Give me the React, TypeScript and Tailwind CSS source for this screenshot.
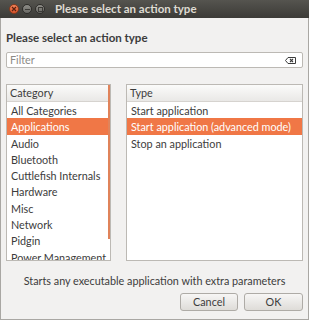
import React from "react";

const categories = [
  "All Categories",
  "Applications",
  "Audio",
  "Bluetooth",
  "Cuttlefish Internals",
  "Hardware",
  "Misc",
  "Network",
  "Pidgin",
  "Power Management",
];

const types = ["Start application", "Start application (advanced mode)", "Stop an application"];

function Row({ label, selected }: { label: string; selected?: boolean }) {
  return (
    <div
      className={
        "h-[16.3px] shrink-0 pl-[4px] leading-[17px] whitespace-nowrap " +
        (selected ? "bg-[#f07746] text-white" : "text-[#3c3c3c]")
      }
    >
      {label}
    </div>
  );
}

function Header({ label }: { label: string }) {
  return (
    <div className="h-[17px] shrink-0 border-b border-[#d6d3cf] bg-gradient-to-b from-[#fbfbfa] to-[#e9e8e6] pl-[3px] leading-[16px] text-[#3c3c3c]">
      {label}
    </div>
  );
}

export default function App() {
  return (
    <div className="relative flex h-[320px] w-[309px] flex-col overflow-hidden bg-[#f2f1f0] font-['Lato',sans-serif] text-[10.8px]">
      {/* Title bar */}
      <div className="flex h-[18px] shrink-0 items-center bg-gradient-to-b from-[#55544f] to-[#3c3b37]">
        <div className="ml-[9px] flex items-center gap-[2px]">
          <div className="flex h-[10px] w-[10px] items-center justify-center rounded-full border border-[#8a3a1c] bg-gradient-to-b from-[#f4845a] to-[#d9532a]">
            <svg width="6" height="6" viewBox="0 0 6 6">
              <path d="M1 1 L5 5 M5 1 L1 5" stroke="#5a2010" strokeWidth="1.2" />
            </svg>
          </div>
          <div className="ml-[1px] flex h-[10px] w-[10px] items-center justify-center rounded-full border border-[#2e2d2a] bg-gradient-to-b from-[#8e8d88] to-[#6a6964]">
            <div className="h-[1px] w-[5px] bg-[#3c3b37]" />
          </div>
          <div className="ml-[1px] flex h-[10px] w-[10px] items-center justify-center rounded-full border border-[#2e2d2a] bg-gradient-to-b from-[#8e8d88] to-[#6a6964]">
            <div className="h-[5px] w-[5px] border border-[#3c3b37]" />
          </div>
        </div>
        <div className="ml-[10px] text-[11.5px] font-bold text-[#dfdbd2] whitespace-nowrap">
          Please select an action type
        </div>
      </div>

      {/* Body */}
      <div className="flex flex-1 flex-col border-x border-b border-[#a9a7a3] px-[5px]">
        <div className="mt-[12px] h-[15px] text-[11.5px] font-bold leading-[15px] text-[#3c3c3c] whitespace-nowrap">
          Please select an action type
        </div>

        <div className="mt-[7px] flex h-[16px] items-center rounded-[2px] border border-[#bcb9b4] bg-white pl-[3px] pr-[6px]">
          <span className="flex-1 text-[#8c8a86]">Filter</span>
          <svg width="11" height="7" viewBox="0 0 11 7">
            <path d="M3 0.5 H10.5 V6.5 H3 L0.5 3.5 Z" fill="none" stroke="#3c3c3c" strokeWidth="1" />
            <path d="M5 2 L8 5 M8 2 L5 5" stroke="#3c3c3c" strokeWidth="1.1" />
          </svg>
        </div>

        <div className="mt-[16px] flex h-[177px] gap-[15px]">
          {/* Category list */}
          <div className="relative flex w-[105px] flex-col overflow-hidden border border-[#bcb9b4] bg-white">
            <Header label="Category" />
            {categories.map((c) => (
              <Row key={c} label={c} selected={c === "Applications"} />
            ))}
            <div className="absolute right-[0px] top-[0px] h-[154px] w-[2px] bg-[#e0835a]" />
          </div>
          {/* Type list */}
          <div className="flex flex-1 flex-col overflow-hidden border border-[#bcb9b4] bg-white">
            <Header label="Type" />
            {types.map((t) => (
              <Row key={t} label={t} selected={t === "Start application (advanced mode)"} />
            ))}
          </div>
        </div>

        <div className="mt-[12px] h-[15px] text-center leading-[15px] text-[#3c3c3c] whitespace-nowrap">
          Starts any executable application with extra parameters
        </div>

        <div className="mt-[5px] flex justify-end gap-[6px]">
          <button className="h-[18px] w-[58px] rounded-[3px] border border-[#aeaba6] bg-gradient-to-b from-[#f7f6f5] to-[#dedcd8] text-[#3c3c3c] leading-[16px]">
            Cancel
          </button>
          <button className="h-[18px] w-[59px] rounded-[3px] border border-[#aeaba6] bg-gradient-to-b from-[#f7f6f5] to-[#dedcd8] text-[#3c3c3c] leading-[16px]">
            OK
          </button>
        </div>
      </div>
    </div>
  );
}
